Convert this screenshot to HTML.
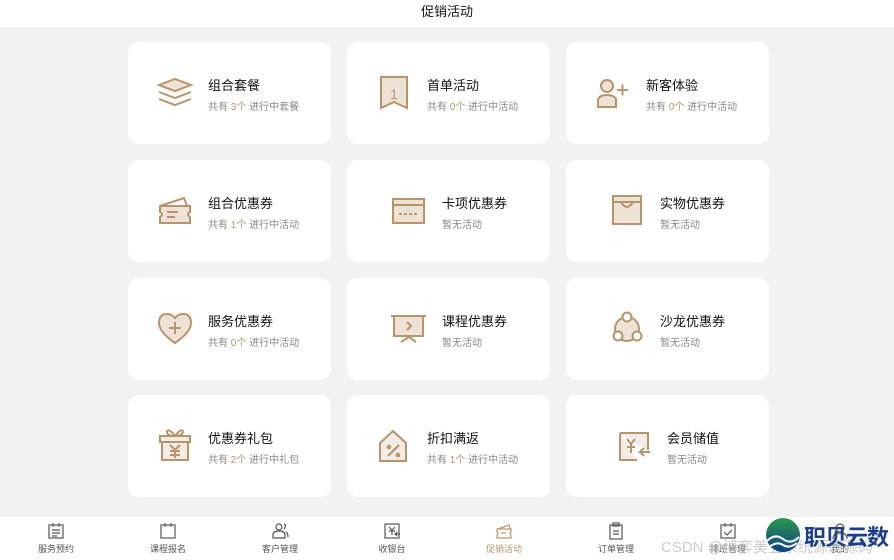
<!DOCTYPE html>
<html><head><meta charset="utf-8"><style>
*{margin:0;padding:0;box-sizing:border-box}
body{width:894px;height:560px;background:#f2f2f2;font-family:"Liberation Sans","Noto Sans CJK SC",sans-serif;position:relative;overflow:hidden}
.top{position:absolute;left:0;top:0;width:894px;height:27px;background:#fff;text-align:center;font-size:13px;line-height:24px;color:#111}
.card{position:absolute;width:203px;height:102px;background:#fff;border-radius:11px}
.t{position:absolute;font-size:13px;color:#111;white-space:nowrap}
.s{position:absolute;font-size:10px;color:#888;white-space:nowrap}
.s b{font-weight:normal;color:#b8946a}
.nav{position:absolute;left:0;top:517px;width:894px;height:43px;background:#fff}
.ni{position:absolute;top:0;width:112px;text-align:center;font-size:9px;color:#555}
.ni svg{display:block;margin:5px auto 2px}
.wm{position:absolute;left:661px;top:536px;font-size:15px;color:rgba(190,190,190,.8);white-space:nowrap}
</style></head><body>
<div class="top">促销活动</div>

<div class="card" style="left:128px;top:42px"></div>
<div class="card" style="left:347px;top:42px"></div>
<div class="card" style="left:566px;top:42px"></div>
<div class="card" style="left:128px;top:160px"></div>
<div class="card" style="left:347px;top:160px"></div>
<div class="card" style="left:566px;top:160px"></div>
<div class="card" style="left:128px;top:278px"></div>
<div class="card" style="left:347px;top:278px"></div>
<div class="card" style="left:566px;top:278px"></div>
<div class="card" style="left:128px;top:395px"></div>
<div class="card" style="left:347px;top:395px"></div>
<div class="card" style="left:566px;top:395px"></div>

<svg width="894" height="560" style="position:absolute;left:0;top:0" fill="none" stroke="#b8946a" stroke-width="2">
<path d="M159 85 L175 79 L191 85 L175 91Z" fill="#ede2d6"/>
<path d="M159 92 L175 98 L191 92 M159 99 L175 105 L191 99"/>
<path d="M381 77 H407 V108 L394 102 L381 108Z" fill="#ede2d6"/>
<text x="394" y="99" font-size="14" fill="#b8946a" stroke="none" text-anchor="middle" font-family="Liberation Sans">1</text>
<circle cx="607" cy="86" r="6" fill="#ede2d6"/>
<path d="M598 107 V101 Q598 95 607 95 Q614 95 616 99 V107Z" fill="#ede2d6"/>
<path d="M617 90 H628 M622.5 84.5 V95.5"/>
<path d="M160 206 L184 198 L187 206" />
<path d="M160 206 H190 V212 Q186 214 190 217 V223 H160 V217 Q164 214 160 212Z" fill="#ede2d6"/>
<path d="M167 212 H178 M167 217 H175"/>
<rect x="393" y="199" width="31" height="24" fill="#ede2d6"/>
<path d="M393 205 H424" /><path d="M399 214 H418" stroke-dasharray="3 2"/>
<path d="M613 196 H641 V224 H613Z" fill="#ede2d6"/><path d="M613 202 H641 M621 202 Q627 212 633 202"/>
<path d="M175 343 Q159 332 159 323 Q159 314 167 314 Q172 314 175 318 Q178 314 183 314 Q191 314 191 323 Q191 332 175 343Z" fill="#ede2d6"/>
<path d="M175 322 V334 M169 328 H181"/>
<path d="M391 316 H426 M394 316 V336 H423 V316" fill="#ede2d6"/><path d="M407 322 L411 326 L407 330 M401 342 L409 337 L416 342"/>
<circle cx="627" cy="329" r="12" fill="#ede2d6"/>
<circle cx="627" cy="317" r="4.5" fill="#fff"/><circle cx="618" cy="336" r="4.5" fill="#fff"/><circle cx="637" cy="336" r="4.5" fill="#fff"/>
<path d="M160 436 H190 V442 H160Z M162 442 H188 V460 H162Z" fill="#f3ece4"/>
<path d="M175 436 Q168 427 167 432 Q167 436 175 436 Q182 436 183 432 Q182 427 175 436"/>
<path d="M170 445 L175 450 L180 445 M175 450 V458 M170 451 H180 M170 455 H180"/>
<path d="M380 443 L393 431 L406 443 V461 H380Z" fill="#f3ece4"/>
<path d="M388 456 L399 445"/><circle cx="389" cy="447" r="1.3" fill="#b8946a"/><circle cx="398" cy="455" r="1.3" fill="#b8946a"/>
<path d="M620 433 H648 V450 M637 460 H620 V433" fill="#f3ece4"/>
<path d="M627 439 L631 444 L635 439 M631 444 V453 M627 447 H635 M650 452 H640 L644 448 M640 452 L644 456"/>
</svg>

<div class="t" style="left:208px;top:75px">组合套餐</div><div class="s" style="left:208px;top:98px">共有 <b>3个</b> 进行中套餐</div>
<div class="t" style="left:427px;top:75px">首单活动</div><div class="s" style="left:427px;top:98px">共有 <b>0个</b> 进行中活动</div>
<div class="t" style="left:646px;top:75px">新客体验</div><div class="s" style="left:646px;top:98px">共有 <b>0个</b> 进行中活动</div>
<div class="t" style="left:208px;top:193px">组合优惠券</div><div class="s" style="left:208px;top:216px">共有 <b>1个</b> 进行中活动</div>
<div class="t" style="left:442px;top:193px">卡项优惠券</div><div class="s" style="left:442px;top:216px">暂无活动</div>
<div class="t" style="left:660px;top:193px">实物优惠券</div><div class="s" style="left:660px;top:216px">暂无活动</div>
<div class="t" style="left:208px;top:311px">服务优惠券</div><div class="s" style="left:208px;top:334px">共有 <b>0个</b> 进行中活动</div>
<div class="t" style="left:442px;top:311px">课程优惠券</div><div class="s" style="left:442px;top:334px">暂无活动</div>
<div class="t" style="left:660px;top:311px">沙龙优惠券</div><div class="s" style="left:660px;top:334px">暂无活动</div>
<div class="t" style="left:208px;top:428px">优惠券礼包</div><div class="s" style="left:208px;top:451px">共有 <b>2个</b> 进行中礼包</div>
<div class="t" style="left:427px;top:428px">折扣满返</div><div class="s" style="left:427px;top:451px">共有 <b>1个</b> 进行中活动</div>
<div class="t" style="left:667px;top:428px">会员储值</div><div class="s" style="left:667px;top:451px">暂无活动</div>

<div class="nav">
<div class="ni" style="left:0"><svg width="18" height="18" fill="none" stroke="#555" stroke-width="1.2"><rect x="2" y="3" width="14" height="13"/><path d="M6 1v4M12 1v4M5 8h8M5 11h8M5 14h5"/></svg>服务预约</div>
<div class="ni" style="left:112px"><svg width="18" height="18" fill="none" stroke="#555" stroke-width="1.2"><rect x="2" y="3" width="14" height="13"/><path d="M6 1v4M12 1v4"/></svg>课程报名</div>
<div class="ni" style="left:224px"><svg width="18" height="18" fill="none" stroke="#555" stroke-width="1.2"><circle cx="8" cy="5" r="3"/><path d="M2 16v-3q0-4 6-4t6 4v3zM13 2q3 1 0 5M15 10q2 1 2 5"/></svg>客户管理</div>
<div class="ni" style="left:336px"><svg width="18" height="18" fill="none" stroke="#555" stroke-width="1.2"><rect x="2" y="2" width="14" height="14"/><path d="M6 5l3 3 3-3M9 8v5M6 9h6M12 12h5M14 10l-2 2 2 2"/></svg>收银台</div>
<div class="ni" style="left:448px;color:#b8946a"><svg width="18" height="18" fill="none" stroke="#b8946a" stroke-width="1.2"><path d="M3 7l11-4 1 4"/><path d="M2 7h14v3q-2 1 0 3v3H2v-3q2-1 0-3z"/><path d="M6 11h5"/></svg>促销活动</div>
<div class="ni" style="left:560px"><svg width="18" height="18" fill="none" stroke="#555" stroke-width="1.2"><rect x="3" y="3" width="12" height="14"/><rect x="6" y="1" width="6" height="3"/><path d="M6 9h6M6 12h6"/></svg>订单管理</div>
<div class="ni" style="left:672px"><svg width="18" height="18" fill="none" stroke="#555" stroke-width="1.2"><rect x="2" y="3" width="14" height="13"/><path d="M6 1v4M12 1v4M5 10l3 3 5-5"/></svg>排班管理</div>
<div class="ni" style="left:784px"><svg width="18" height="18" fill="none" stroke="#555" stroke-width="1.2"><circle cx="9" cy="6" r="4"/><path d="M2 17q0-6 7-6t7 6"/></svg>我的</div>
</div>
<div class="wm">CSDN @博弈美业系统源码源码</div>
<svg width="36" height="36" style="position:absolute;left:765px;top:517px"><defs><linearGradient id="g" x1="0" y1="0" x2="0" y2="1"><stop offset="0" stop-color="#2a9a4a"/><stop offset="1" stop-color="#0d3f8a"/></linearGradient></defs><circle cx="18" cy="18" r="17" fill="url(#g)"/><path d="M2 24q8-8 16-2t16-2M4 30q8-6 14-2t14-2" stroke="#fff" stroke-width="2" fill="none"/></svg>
<div style="position:absolute;left:804px;top:520px;font-size:22px;font-weight:bold;color:#1a3e8c;white-space:nowrap;letter-spacing:-1px">职贝云数</div>
</body></html>
